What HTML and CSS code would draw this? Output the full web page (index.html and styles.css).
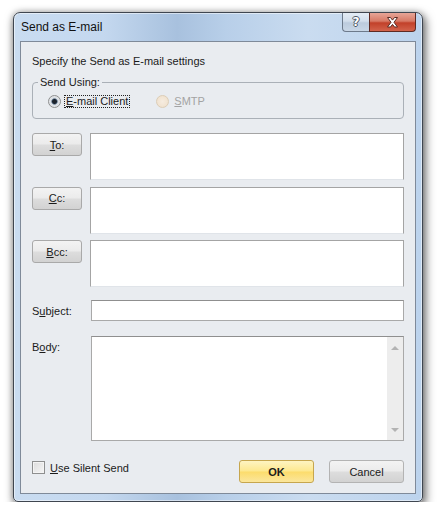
FILE: index.html
```html
<!DOCTYPE html>
<html lang="en">
<head>
    <meta charset="UTF-8">
    <title>Send as E-mail</title>
    <link rel="stylesheet" href="styles.css">
</head>
<body>

<div class="window">
    <div class="titlebar">
        <span class="title">Send as E-mail</span>
        <div class="caption-buttons">
            <div class="cap help"><span class="help-glyph">?</span></div>
            <div class="cap close">
                <svg width="13" height="11" viewBox="0 0 13 11">
                    <path d="M1.5 0.5h3l2 2.6 2-2.6h3l-3.5 4.8 3.5 4.7h-3l-2-2.6-2 2.6h-3l3.5-4.7z" fill="#fff" stroke="#5a2a22" stroke-width="1" stroke-linejoin="round"/>
                </svg>
            </div>
        </div>
    </div>

    <div class="client">
        <p class="intro">Specify the Send as E-mail settings</p>

        <fieldset class="send-using">
            <legend>Send Using:</legend>
            <div class="radios">
                <label class="radio">
                    <span class="radio-dot checked"></span>
                    <span class="radio-text focused"><u>E</u>-mail Client</span>
                </label>
                <label class="radio disabled">
                    <span class="radio-dot"></span>
                    <span class="radio-text"><u>S</u>MTP</span>
                </label>
            </div>
        </fieldset>

        <div class="recipients">
            <div class="recipient-row">
                <button class="btn addr-btn"><u>T</u>o:</button>
                <div class="addr-box"></div>
            </div>
            <div class="recipient-row">
                <button class="btn addr-btn"><u>C</u>c:</button>
                <div class="addr-box"></div>
            </div>
            <div class="recipient-row">
                <button class="btn addr-btn"><u>B</u>cc:</button>
                <div class="addr-box"></div>
            </div>
        </div>

        <div class="field-row subject-row">
            <label class="field-label">S<u>u</u>bject:</label>
            <div class="textbox subject-box"></div>
        </div>

        <div class="field-row body-row">
            <label class="field-label">B<u>o</u>dy:</label>
            <div class="textbox body-box">
                <div class="body-text"></div>
                <div class="scrollbar">
                    <span class="arrow up"></span>
                    <span class="arrow down"></span>
                </div>
            </div>
        </div>

        <div class="footer">
            <label class="check">
                <span class="check-box"></span>
                <span><u>U</u>se Silent Send</span>
            </label>
            <div class="actions">
                <button class="btn ok-btn">OK</button>
                <button class="btn cancel-btn">Cancel</button>
            </div>
        </div>
    </div>
</div>

</body>
</html>
```

FILE: styles.css
```css
* {
    box-sizing: border-box;
}

body {
    margin: 0;
    background: #ffffff;
    font-family: "Liberation Sans", Arial, sans-serif;
    font-size: 11px;
    color: #1b1b1b;
}

u {
    text-decoration-thickness: 1px;
    text-underline-offset: 1px;
}

.window {
    width: 410px;
    height: 490px;
    margin: 12px 0 0 13px;
    padding: 0 6px 7px 6px;
    display: flex;
    flex-direction: column;
    border: 1px solid #3f4650;
    border-radius: 7px 7px 5px 5px;
    background: linear-gradient(90deg, #c9dcf1 0%, #c4d8ef 22%, #a8c1de 40%, #b8cfe9 52%, #cadcf0 72%, #bcd3ed 100%);
    box-shadow: inset 0 0 0 1px rgba(255, 255, 255, 0.5), 0 0 6px rgba(0, 0, 0, 0.25), 2px 4px 10px 1px rgba(0, 0, 0, 0.5);
}

.titlebar {
    height: 28px;
    display: flex;
    justify-content: space-between;
    align-items: flex-start;
}

.title {
    padding: 7px 0 0 1px;
    font-size: 12px;
    line-height: 14px;
    color: #111;
}

.caption-buttons {
    display: flex;
    height: 19px;
}

.cap {
    height: 19px;
    display: flex;
    justify-content: center;
    align-items: center;
    border: 1px solid #6d7a8b;
    border-top: none;
}

.help {
    width: 27px;
    border-right: none;
    border-radius: 0 0 0 4px;
    background: linear-gradient(#e4ecf5, #d2deec 45%, #bccbdd 55%, #c9d7e7);
}

.help-glyph {
    font-family: "DejaVu Sans", sans-serif;
    font-weight: bold;
    font-size: 12px;
    line-height: 12px;
    color: #ffffff;
    text-shadow: -1px 0 #4c5563, 1px 0 #4c5563, 0 -1px #4c5563, 0 1px #4c5563;
}

.close {
    width: 47px;
    border-color: #5e2a23;
    border-radius: 0 0 4px 0;
    background: linear-gradient(#e7a597, #d77a66 45%, #c2412a 55%, #d2634c);
}

.client {
    flex: 1;
    padding: 12px 11px 0 11px;
    display: flex;
    flex-direction: column;
    border: 1px solid #7f8a99;
    background: #e9ecf0;
}

.intro {
    margin: 0;
    line-height: 14px;
}

.send-using {
    margin: 8px 0 0;
    padding: 0 5px 10px 5px;
    border: 1px solid #aab0b7;
    border-radius: 4px;
}

.send-using legend {
    padding: 0 2px;
    line-height: 13px;
}

.radios {
    margin: 6px 0 0 10px;
    display: flex;
    align-items: center;
    gap: 26px;
}

.radio {
    display: flex;
    align-items: center;
    gap: 3px;
}

.radio-dot {
    width: 13px;
    height: 13px;
    border-radius: 50%;
    border: 1px solid #8e8f8f;
    background: radial-gradient(circle, #f4f4f4 0, #e4e6e9 100%);
}

.radio-dot.checked {
    background: radial-gradient(circle, #1b222b 0 2px, #4f6782 2.6px, #d9dde2 3.6px, #f3f3f3 100%);
}

.radio.disabled .radio-dot {
    border-color: #dccdb6;
    background: radial-gradient(circle, #f6ece0 0, #efdfca 100%);
}

.radio-text {
    padding: 0 1px;
    line-height: 11px;
    border: 1px solid transparent;
}

.radio-text.focused {
    border: 1px dotted #222;
}

.radio.disabled .radio-text {
    color: #a3a3a3;
}

.btn {
    font-family: inherit;
    font-size: 11px;
    color: #1b1b1b;
    padding: 0;
    border: 1px solid #a9a9a9;
    border-radius: 3px;
    background: linear-gradient(#f3f3f3, #ebebeb 48%, #dddddd 52%, #d2d2d2);
}

.recipients {
    margin-top: 14px;
    display: flex;
    flex-direction: column;
    gap: 6.5px;
}

.recipient-row {
    height: 47px;
    display: flex;
    align-items: flex-start;
    gap: 8px;
}

.addr-btn {
    width: 50px;
    height: 23px;
}

.addr-box {
    flex: 1;
    height: 47px;
    background: #ffffff;
    border: 1px solid #a4a4a4;
    border-bottom-color: #e0e4e9;
}

.field-row {
    display: flex;
    align-items: flex-start;
}

.field-label {
    width: 59px;
    line-height: 14px;
}

.textbox {
    width: 313px;
    background: #ffffff;
    border: 1px solid #a9a9a9;
    border-top-color: #8f8f8f;
}

.subject-row {
    margin-top: 13px;
    align-items: center;
}

.subject-box {
    height: 21px;
}

.body-row {
    margin-top: 15px;
}

.body-row .field-label {
    padding-top: 4px;
}

.body-box {
    height: 105px;
    display: flex;
}

.body-text {
    flex: 1;
}

.scrollbar {
    width: 16px;
    padding: 9px 0 8px;
    display: flex;
    flex-direction: column;
    justify-content: space-between;
    align-items: center;
    background: #ededed;
}

.arrow {
    width: 0;
    height: 0;
    border-left: 4px solid transparent;
    border-right: 4px solid transparent;
}

.arrow.up {
    border-bottom: 4px solid #b3b3b3;
}

.arrow.down {
    border-top: 4px solid #b3b3b3;
}

.footer {
    margin-top: 19px;
    display: flex;
    justify-content: space-between;
    align-items: flex-start;
}

.check {
    margin-top: 1px;
    display: flex;
    align-items: center;
    gap: 5px;
}

.check-box {
    width: 13px;
    height: 13px;
    border: 1px solid #8e8f8f;
    background: linear-gradient(135deg, #dcdcdc, #f6f6f6);
    box-shadow: inset 0 0 0 1px #f4f4f4;
}

.actions {
    display: flex;
    gap: 15px;
}

.ok-btn,
.cancel-btn {
    width: 75px;
    height: 23px;
}

.ok-btn {
    font-weight: bold;
    border-color: #c6a64e;
    background: linear-gradient(#fef4c2, #fde88f 48%, #fcdc6c 52%, #fbe69c);
}

.cancel-btn {
    border-color: #b3b3b3;
}
```
